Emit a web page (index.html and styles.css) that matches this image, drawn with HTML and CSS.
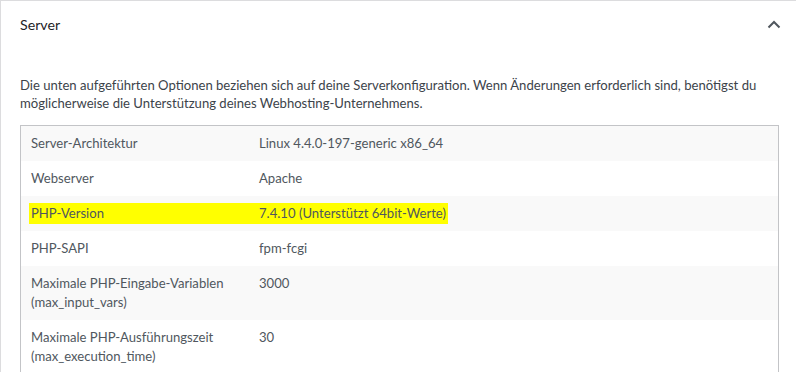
FILE: index.html
```html
<!DOCTYPE html>
<html lang="de">
<head>
<meta charset="utf-8">
<title>Server</title>
<link rel="stylesheet" href="styles.css">
</head>
<body>
<section class="panel">
  <header class="panel-head">
    <h2 class="panel-title">Server</h2>
    <button class="toggle" type="button" aria-expanded="true" aria-label="Bereich einklappen">
      <svg width="14" height="9" viewBox="0 0 14 9" aria-hidden="true"><path d="M1.5 7.5 L7 2 L12.5 7.5" fill="none" stroke="#50575e" stroke-width="2"/></svg>
    </button>
  </header>
  <div class="panel-body">
    <p class="intro">Die unten aufgeführten Optionen beziehen sich auf deine Serverkonfiguration. Wenn Änderungen erforderlich sind, benötigst du möglicherweise die Unterstützung deines Webhosting-Unternehmens.</p>
    <table class="info">
      <tbody>
        <tr><td class="k">Server-Architektur</td><td>Linux 4.4.0-197-generic x86_64</td></tr>
        <tr><td class="k">Webserver</td><td>Apache</td></tr>
        <tr class="marked"><td colspan="2"><span class="mark"><span class="mk">PHP-Version</span><span>7.4.10 (Unterstützt 64bit-Werte)</span></span></td></tr>
        <tr><td class="k">PHP-SAPI</td><td>fpm-fcgi</td></tr>
        <tr><td class="k">Maximale PHP-Eingabe-Variablen (max_input_vars)</td><td>3000</td></tr>
        <tr><td class="k">Maximale PHP-Ausführungszeit (max_execution_time)</td><td>30</td></tr>
      </tbody>
    </table>
  </div>
</section>
</body>
</html>
```
FILE: styles.css
```css
html, body {
  margin: 0;
  padding: 0;
  background: #fff;
}

body {
  font-family: Lato, "Noto Sans", sans-serif;
  font-size: 13.1px;
  color: #50575e;
  overflow: hidden;
}

.panel {
  border-top: 1px solid #dcdcde;
  border-left: 1px solid #dcdcde;
  padding: 0 17px 0 19px;
  min-height: 371px;
}

.panel-head {
  display: flex;
  align-items: center;
  justify-content: space-between;
  height: 46px;
}

.panel-title {
  margin: 0;
  font-size: 14.2px;
  font-weight: 400;
  color: #1d2327;
}

.toggle {
  background: none;
  border: 0;
  padding: 0;
  margin-right: -2px;
  width: 14px;
  height: 9px;
  display: flex;
}

.intro {
  margin: 29px 0 13px;
  line-height: 18px;
  color: #3c434a;
}

.info {
  width: 100%;
  border-collapse: collapse;
  border: 1px solid #c3c4c7;
  border-bottom: 0;
}

.info td {
  padding: 8px 10px;
  line-height: 19px;
  vertical-align: top;
}

.info td.k {
  width: 208px;
}

.info tr:nth-child(odd) {
  background: #f9f9f9;
}

.info tr.marked td {
  padding: 8px 10px 8px 8px;
}

.mark {
  display: inline-block;
  background: #ffff00;
  padding: 1px 2px;
  margin: -1px 0;
}

.mk {
  display: inline-block;
  width: 228px;
}
```
